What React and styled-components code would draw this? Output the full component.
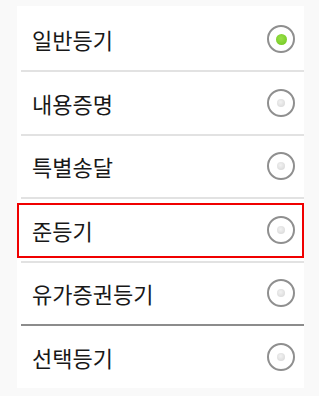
import React, { useState } from "react";
import styled, { createGlobalStyle } from "styled-components";

const GlobalStyle = createGlobalStyle`
  html, body {
    margin: 0;
    padding: 0;
    background: #f9f9f9;
  }
  body {
    font-family: "Noto Sans CJK KR", "Noto Sans", sans-serif;
  }
`;

const Page = styled.div`
  width: 319px;
  height: 396px;
  box-sizing: border-box;
  padding: 6px 15px 8px 17px;
  background: #f9f9f9;
`;

const Card = styled.div`
  background: #ffffff;
  padding-top: 2.5px;
  display: flex;
  flex-direction: column;
`;

const Row = styled.div`
  height: 61.5px;
  box-sizing: border-box;
  padding: 4px 0 3px;
  display: flex;
`;

const Item = styled.label`
  flex: 1;
  display: flex;
  align-items: center;
  justify-content: space-between;
  box-sizing: border-box;
  border: 2px solid ${(p) => (p.$focused ? "#f00000" : "transparent")};
  padding: 0 7px 1px 13px;
  cursor: pointer;
`;

const Label = styled.span`
  font-size: 22px;
  font-weight: 400;
  color: #181818;
  line-height: 1;
`;

const Radio = styled.span`
  width: 28px;
  height: 28px;
  box-sizing: border-box;
  border: 2px solid #8f8f8f;
  border-radius: 50%;
  display: flex;
  align-items: center;
  justify-content: center;
  background: #fff;

  &::after {
    content: "";
    width: ${(p) => (p.$checked ? "11px" : "8px")};
    height: ${(p) => (p.$checked ? "11px" : "8px")};
    border-radius: 50%;
    background: ${(p) =>
      p.$checked
        ? "radial-gradient(circle at 45% 40%, #9be04a, #6cc61c)"
        : "radial-gradient(circle at 45% 40%, #f2f2f2, #d4d4d4)"};
  }
`;

const Divider = styled.div`
  height: 2px;
  margin-left: 4px;
  background: ${(p) => (p.$dark ? "#8c8c8c" : "#e2e2e2")};
`;

const options = ["일반등기", "내용증명", "특별송달", "준등기", "유가증권등기", "선택등기"];

export default function App() {
  const [selected, setSelected] = useState(0);
  const focused = 3;

  return (
    <>
      <GlobalStyle />
      <Page>
        <Card>
          {options.map((name, i) => (
            <React.Fragment key={name}>
              {i > 0 && <Divider $dark={i === 5} />}
              <Row>
                <Item $focused={i === focused} onClick={() => setSelected(i)}>
                  <Label>{name}</Label>
                  <Radio $checked={i === selected} />
                </Item>
              </Row>
            </React.Fragment>
          ))}
        </Card>
      </Page>
    </>
  );
}
